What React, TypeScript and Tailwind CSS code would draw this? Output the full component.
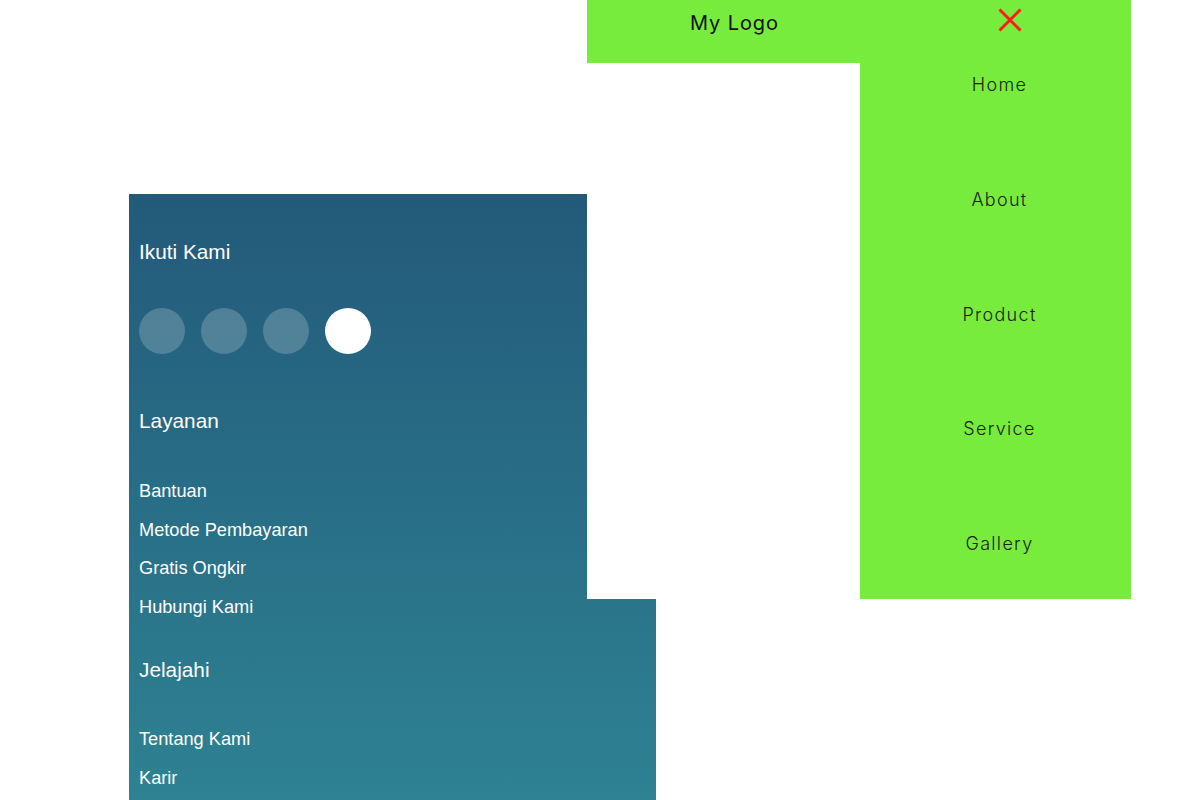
const menuItems = ["Home", "About", "Product", "Service", "Gallery"];

const layanan = ["Bantuan", "Metode Pembayaran", "Gratis Ongkir", "Hubungi Kami"];
const jelajahi = ["Tentang Kami", "Karir"];

function CloseIcon() {
  return (
    <svg width="24" height="24" viewBox="0 0 24 24" className="block">
      <path d="M1.5 1.5 L22.5 22.5 M22.5 1.5 L1.5 22.5" stroke="#ff1a1a" strokeWidth="3" strokeLinecap="butt" />
    </svg>
  );
}

export default function App() {
  return (
    <div className="relative h-[800px] w-[1200px] overflow-hidden bg-white">
      <header className="ml-[587px] flex h-[63px] w-[544px] items-start bg-[#77ec3d] font-['Inter',sans-serif]">
        <div className="ml-[103px] mt-[8px] text-[20px] font-normal tracking-[0.9px] text-[#111]">My Logo</div>
        <button className="ml-auto mr-[109px] mt-[8px]">
          <CloseIcon />
        </button>
      </header>

      {/* dropdown menu, opened over the page */}
      <nav className="absolute left-[860px] top-[63px] h-[536px] w-[271px] bg-[#77ec3d] font-['Inter',sans-serif]">
        <ul className="flex flex-col gap-[90.75px] pl-[8px] pt-[10px]">
          {menuItems.map((item) => (
            <li key={item} className="h-6 text-center text-[18px] leading-6 font-light tracking-[1.3px] text-[#1d1d1d]">
              {item}
            </li>
          ))}
        </ul>
      </nav>

      <footer className="ml-[129px] mt-[131px] h-[606px] w-[527px] bg-gradient-to-b from-[#235a7a] to-[#2e8292] px-[10px] font-['Liberation_Sans',Arial,sans-serif] text-white [clip-path:polygon(0_0,458px_0,458px_405px,100%_405px,100%_100%,0_100%)]">
        <h3 className="pt-[46px] text-[20.8px] leading-6">Ikuti Kami</h3>
        <div className="mt-[44px] flex gap-4">
          <span className="h-[46px] w-[46px] rounded-full bg-white/20" />
          <span className="h-[46px] w-[46px] rounded-full bg-white/20" />
          <span className="h-[46px] w-[46px] rounded-full bg-white/20" />
          <span className="h-[46px] w-[46px] rounded-full bg-white" />
        </div>

        <h3 className="mt-[55px] text-[20.8px] leading-6">Layanan</h3>
        <ul className="mt-[46px] flex flex-col gap-[14.67px] text-[18.2px] leading-6">
          {layanan.map((item) => (
            <li key={item}>{item}</li>
          ))}
        </ul>

        <h3 className="mt-[39px] text-[20.8px] leading-6">Jelajahi</h3>
        <ul className="mt-[45px] flex flex-col gap-[14.67px] text-[18.2px] leading-6">
          {jelajahi.map((item) => (
            <li key={item}>{item}</li>
          ))}
        </ul>
      </footer>
    </div>
  );
}
